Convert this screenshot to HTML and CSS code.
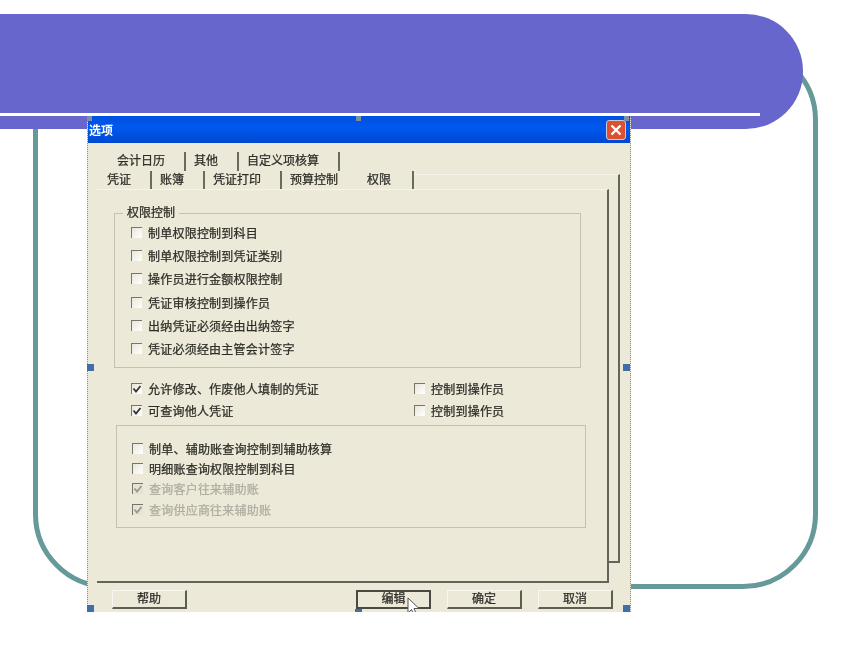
FILE: index.html
```html
<!DOCTYPE html>
<html lang="zh-CN">
<head>
    <meta charset="UTF-8">
    <title>选项</title>
    <link rel="stylesheet" href="styles.css">
</head>
<body>
    <div class="slide">
        <div class="frame"></div>

        <!-- Title banner -->
        <div class="banner"><div class="banner-line"></div></div>

        <!-- Dialog screenshot -->
        <div class="dialog">
            <div class="dialog-inner">
                <div class="titlebar">
                    <span class="title">选项</span>
                    <span class="close">
                        <svg width="14" height="14" viewBox="0 0 14 14"><path d="M2.5 2.5L11.5 11.5M11.5 2.5L2.5 11.5" stroke="#fff" stroke-width="2.4" fill="none"/></svg>
                    </span>
                </div>

                <div class="tabs tabs-back">
                    <span class="tab">会计日历</span>
                    <span class="tab">其他</span>
                    <span class="tab">自定义项核算</span>
                </div>
                <div class="tabs tabs-front">
                    <span class="tab">凭证</span>
                    <span class="tab">账簿</span>
                    <span class="tab">凭证打印</span>
                    <span class="tab tab-plain">预算控制</span>
                    <span class="tab tab-active">权限</span>
                </div>

                <div class="page-back"></div>
                <div class="page">
                    <div class="group group-top">
                        <span class="group-title">权限控制</span>
                        <div class="row"><span class="box"></span>制单权限控制到科目</div>
                        <div class="row"><span class="box"></span>制单权限控制到凭证类别</div>
                        <div class="row"><span class="box"></span>操作员进行金额权限控制</div>
                        <div class="row"><span class="box"></span>凭证审核控制到操作员</div>
                        <div class="row"><span class="box"></span>出纳凭证必须经由出纳签字</div>
                        <div class="row"><span class="box"></span>凭证必须经由主管会计签字</div>
                    </div>

                    <div class="middle">
                        <div class="row"><span class="box"><svg class="tick" viewBox="0 0 10 10"><path d="M1.5 4.5L4 7.5L8.5 2" /></svg></span>允许修改、作废他人填制的凭证</div>
                        <div class="row"><span class="box"></span>控制到操作员</div>
                        <div class="row"><span class="box"><svg class="tick" viewBox="0 0 10 10"><path d="M1.5 4.5L4 7.5L8.5 2" /></svg></span>可查询他人凭证</div>
                        <div class="row"><span class="box"></span>控制到操作员</div>
                    </div>

                    <div class="group group-bottom">
                        <div class="row"><span class="box"></span>制单、辅助账查询控制到辅助核算</div>
                        <div class="row"><span class="box"></span>明细账查询权限控制到科目</div>
                        <div class="row row-off"><span class="box"><svg class="tick" viewBox="0 0 10 10"><path d="M1.5 4.5L4 7.5L8.5 2" /></svg></span>查询客户往来辅助账</div>
                        <div class="row row-off"><span class="box"><svg class="tick" viewBox="0 0 10 10"><path d="M1.5 4.5L4 7.5L8.5 2" /></svg></span>查询供应商往来辅助账</div>
                    </div>
                </div>

                <div class="buttons">
                    <span class="btn btn-help">帮助</span>
                    <span class="btn btn-focus">编辑</span>
                    <span class="btn">确定</span>
                    <span class="btn">取消</span>
                </div>
            </div>

            <!-- Selection handles -->
            <span class="handle handle-grey h-tl"></span>
            <span class="handle handle-grey h-tc"></span>
            <span class="handle handle-grey h-tr"></span>
            <span class="handle h-ml"></span>
            <span class="handle h-mr"></span>
            <span class="handle h-bl"></span>
            <span class="handle h-bc"></span>
            <span class="handle h-br"></span>

            <svg class="cursor" width="14" height="20" viewBox="0 0 14 20"><path d="M1 1V16L4.5 12.5L7 18.5L9.5 17.5L7 11.5H12Z" fill="#fff" stroke="#555" stroke-width="1"/></svg>
        </div>
    </div>
</body>
</html>
```

FILE: styles.css
```css
html, body {
    margin: 0;
    padding: 0;
    background: #fff;
}

.slide {
    position: relative;
    width: 860px;
    height: 645px;
    overflow: hidden;
    font-family: "Liberation Sans", "Noto Sans CJK SC", sans-serif;
}

.frame {
    position: absolute;
    left: 33px;
    top: 45px;
    width: 775px;
    height: 534px;
    border: 5px solid #669999;
    border-radius: 75px;
}

.banner {
    position: absolute;
    left: 0;
    top: 14px;
    width: 803px;
    height: 115px;
    background: #6666cc;
    border-radius: 0 57px 57px 0;
}

.banner-line {
    margin-top: 99px;
    width: 760px;
    height: 3px;
    background: #fff;
}

.dialog {
    position: absolute;
    left: 87px;
    top: 116px;
    width: 544px;
    height: 496px;
    overflow: hidden;
}

.dialog-inner {
    position: relative;
    height: 496px;
    box-sizing: border-box;
    background: #ece9d8;
    border-left: 1px dotted #6f8fd8;
    border-right: 1px dotted #6f8fd8;
    font-size: 12px;
    color: #2e2e28;
    -webkit-text-stroke: 0.25px #2e2e28;
    filter: blur(0.5px);
}

.titlebar {
    display: flex;
    align-items: center;
    justify-content: space-between;
    height: 27px;
    padding: 0 4px 0 1px;
    background: linear-gradient(#0050e0, #0058ee 45%, #0048d0);
}

.title {
    color: #fff;
    font-weight: bold;
    -webkit-text-stroke: 0;
}

.close {
    display: flex;
    align-items: center;
    justify-content: center;
    width: 20px;
    height: 20px;
    margin-top: 1px;
    background: #dd5030;
    border: 1px solid #c8c8d8;
    border-radius: 3px;
    box-sizing: border-box;
}

.tabs {
    display: flex;
    height: 19px;
    line-height: 18px;
}

.tabs-back {
    margin-top: 9px;
    padding-left: 20px;
}

.tabs-front {
    padding-left: 10px;
    height: 18px;
}

.tab {
    padding: 0 19px 0 8px;
    border-right: 2px solid #6b6a5e;
}

.tabs .tab:first-child {
    padding-left: 9px;
}

.tabs-front .tab-plain {
    border-right: 0;
    padding-right: 21px;
}

.tabs-front .tab-active {
    padding: 0 21px 0 8px;
    background: #ece9d8;
}

.page-back {
    position: absolute;
    right: 10px;
    top: 58px;
    width: 206px;
    height: 389px;
    border-top: 1px solid #f6f4ea;
    border-right: 2px solid #65645a;
    border-bottom: 2px solid #65645a;
    box-sizing: border-box;
}

.page {
    position: relative;
    box-sizing: border-box;
    width: 512px;
    height: 394px;
    margin-left: 9px;
    padding-top: 23px;
    background: #ece9d8;
    border-top: 1px solid #f6f4ea;
    border-right: 2px solid #65645a;
    border-bottom: 2px solid #65645a;
}

.group {
    position: relative;
    box-sizing: border-box;
    border: 1px solid #c3c2ae;
}

.group-top {
    width: 467px;
    height: 155px;
    margin-left: 17px;
    padding: 7px 0 0 16px;
}

.group-title {
    position: absolute;
    left: 8px;
    top: -8px;
    padding: 0 4px;
    line-height: 14px;
    background: #ece9d8;
}

.group-top .row {
    height: 23.2px;
}

.middle {
    display: grid;
    grid-template-columns: 283px auto;
    margin: 9px 0 4px 34px;
}

.middle .row {
    height: 22px;
}

.group-bottom {
    width: 470px;
    height: 103px;
    margin-left: 19px;
    padding: 12px 0 0 15px;
}

.group-bottom .row {
    height: 20.4px;
}

.row {
    display: flex;
    align-items: center;
    white-space: nowrap;
    letter-spacing: 0.22px;
}

.row-off {
    color: #aeada0;
    -webkit-text-stroke: 0.25px #aeada0;
}

.box {
    display: block;
    width: 11px;
    height: 11px;
    margin-right: 6px;
    border-top: 1px solid #77766a;
    border-left: 1px solid #77766a;
    background: linear-gradient(135deg, #e8e6da, #fff);
    box-sizing: border-box;
}

.tick {
    display: block;
    width: 10px;
    height: 10px;
    fill: none;
    stroke: #333;
    stroke-width: 1.8;
}

.row-off .tick {
    stroke: #9a998c;
}

.row-off .box {
    background: #e6e3d4;
}

.buttons {
    display: flex;
    gap: 16px;
    padding: 7px 0 0 24px;
}

.btn {
    box-sizing: border-box;
    width: 75px;
    height: 19px;
    line-height: 17px;
    text-align: center;
    border-top: 1px solid #f8f6ee;
    border-left: 1px solid #f8f6ee;
    border-right: 2px solid #5e5d52;
    border-bottom: 2px solid #5e5d52;
}

.btn-help {
    margin-right: 153px;
}

.btn-focus {
    border: 2px solid #4a4a42;
    line-height: 15px;
}

.handle {
    position: absolute;
    width: 7px;
    height: 7px;
    background: #3f6fa8;
}

.handle-grey {
    background: #7c8ea8;
    width: 5px;
    height: 5px;
}

.h-tl { left: 0; top: 0; }
.h-tc { left: 269px; top: 0; }
.h-tr { right: 2px; top: 0; }
.h-ml { left: 0; top: 248px; }
.h-mr { right: 1px; top: 248px; }
.h-bl { left: 0; bottom: 0; }
.h-bc { left: 268px; bottom: -4px; }
.h-br { right: 1px; bottom: 0; }

.cursor {
    position: absolute;
    left: 320px;
    top: 481px;
}
```
